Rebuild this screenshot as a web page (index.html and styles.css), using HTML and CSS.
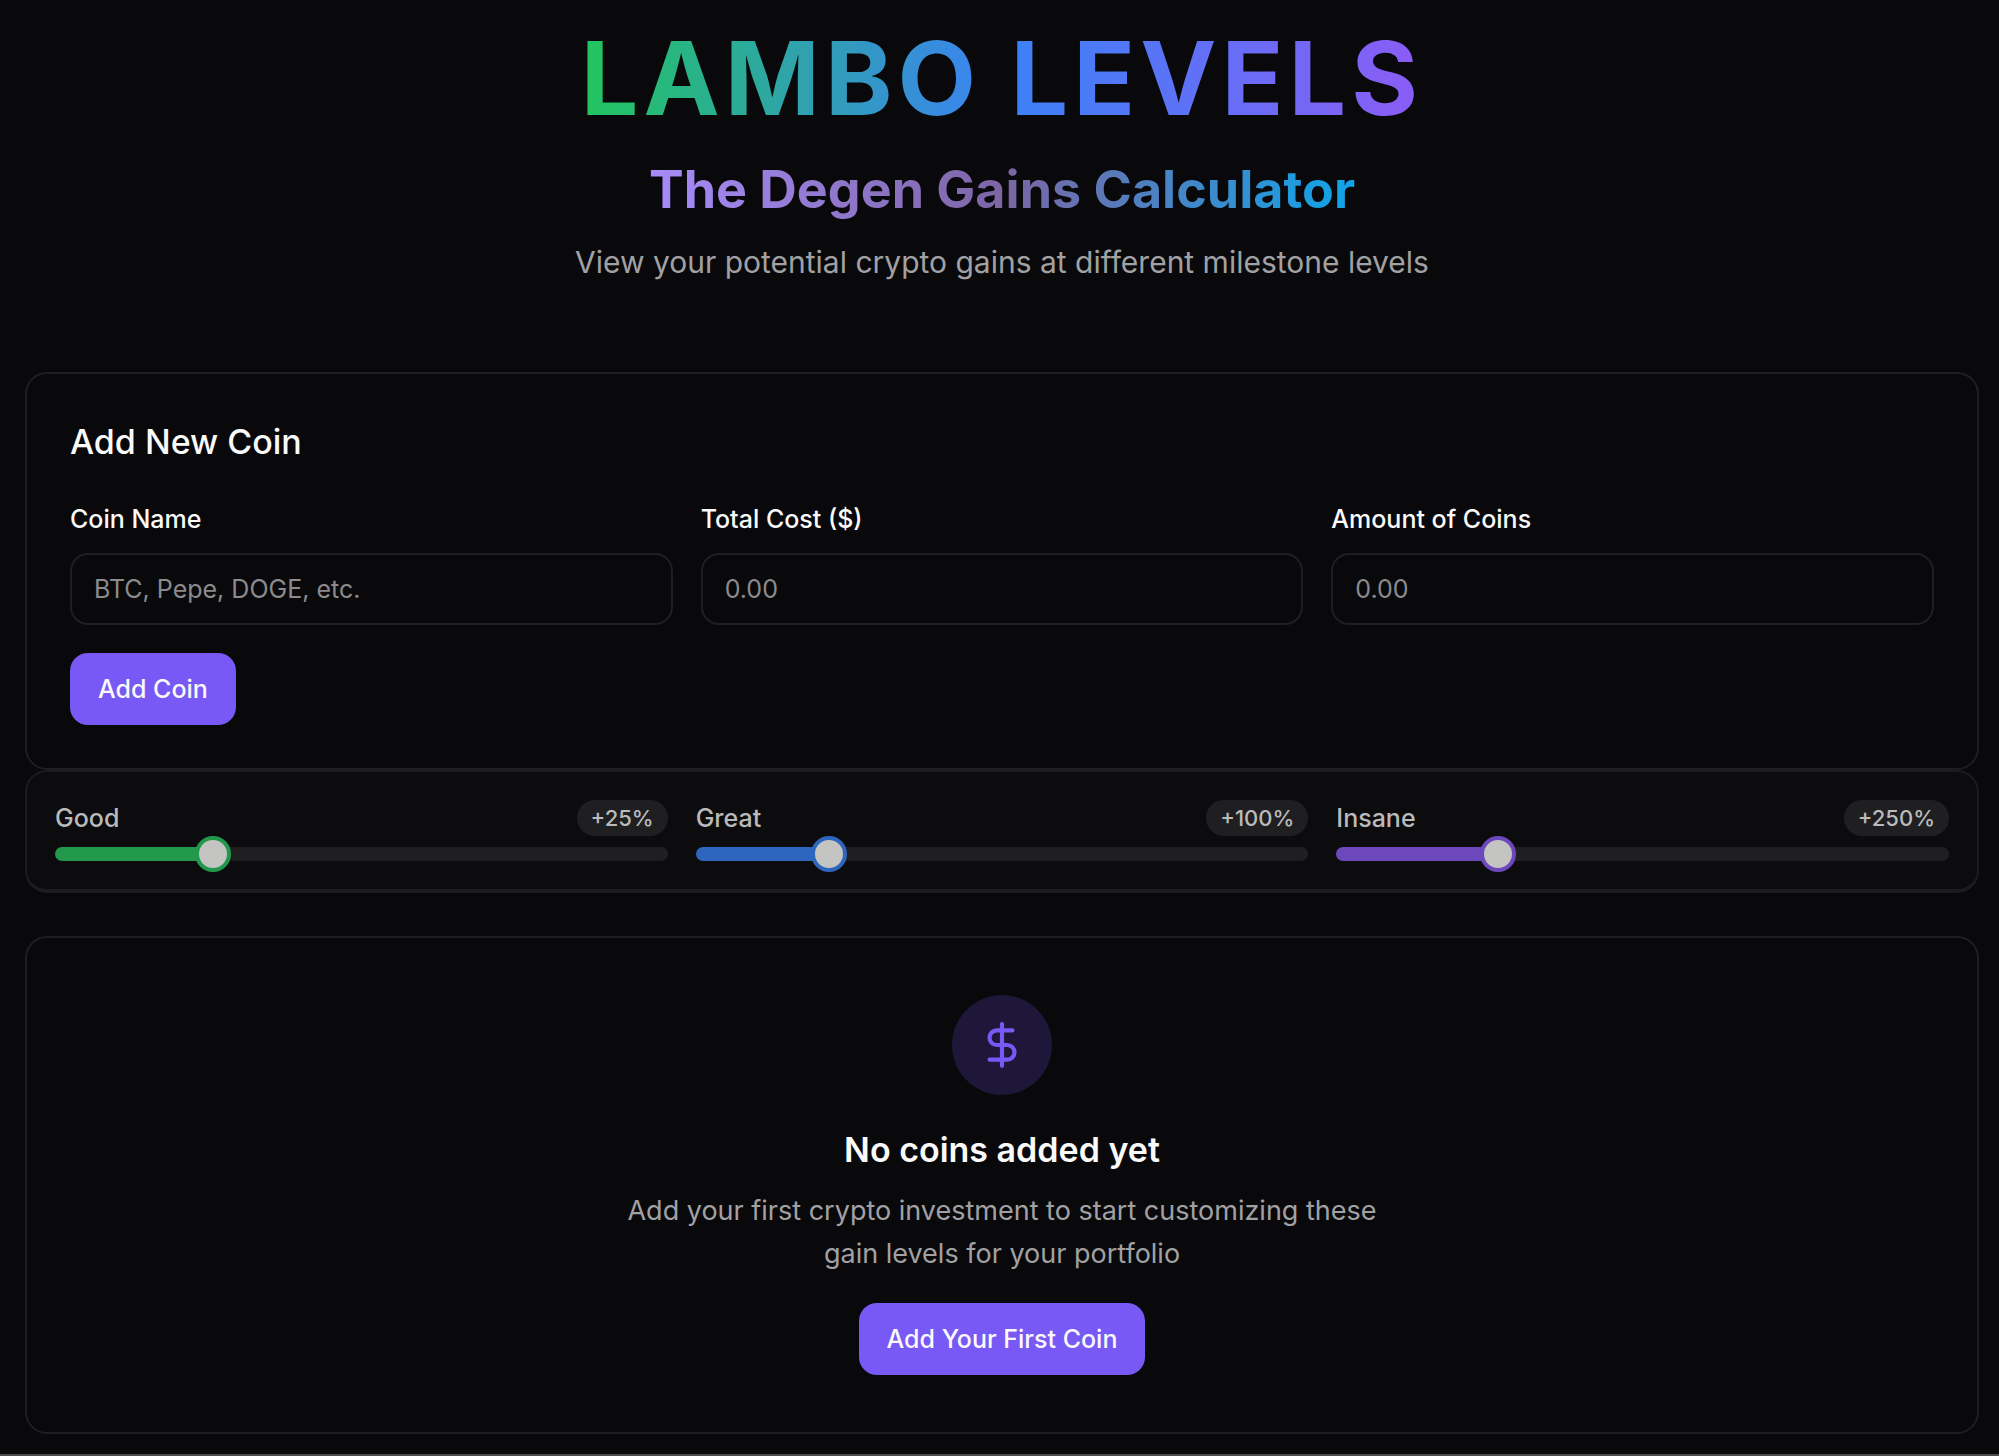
FILE: index.html
```html
<!DOCTYPE html>
<html lang="en">
<head>
  <meta charset="UTF-8">
  <title>Lambo Levels</title>
  <link rel="stylesheet" href="styles.css">
</head>
<body>
  <header class="header">
    <h1 class="title">LAMBO LEVELS</h1>
    <h2 class="subtitle">The Degen Gains Calculator</h2>
    <p class="tagline">View your potential crypto gains at different milestone levels</p>
  </header>

  <main class="content">
    <section class="card coin-card">
      <h3 class="card-title">Add New Coin</h3>
      <form class="coin-form">
        <div class="field">
          <label for="coin-name">Coin Name</label>
          <input class="text-input" id="coin-name" type="text" placeholder="BTC, Pepe, DOGE, etc.">
        </div>
        <div class="field">
          <label for="total-cost">Total Cost ($)</label>
          <input class="text-input" id="total-cost" type="text" inputmode="decimal" placeholder="0.00">
        </div>
        <div class="field">
          <label for="amount">Amount of Coins</label>
          <input class="text-input" id="amount" type="text" inputmode="decimal" placeholder="0.00">
        </div>
        <div class="form-actions">
          <button class="button" type="button">Add Coin</button>
        </div>
      </form>
    </section>

    <section class="card levels">
      <div class="level good">
        <div class="level-head">
          <label for="good">Good</label>
          <span class="badge">+25%</span>
        </div>
        <input class="slider" id="good" type="range" min="1" max="100" value="25" style="--fill: 0.24">
      </div>
      <div class="level great">
        <div class="level-head">
          <label for="great">Great</label>
          <span class="badge">+100%</span>
        </div>
        <input class="slider" id="great" type="range" min="0" max="500" value="100" style="--fill: 0.2">
      </div>
      <div class="level insane">
        <div class="level-head">
          <label for="insane">Insane</label>
          <span class="badge">+250%</span>
        </div>
        <input class="slider" id="insane" type="range" min="0" max="1000" value="250" style="--fill: 0.25">
      </div>
    </section>

    <section class="card empty">
      <div class="empty-icon">
        <svg viewBox="0 0 24 24" fill="none" stroke="currentColor" stroke-width="2" stroke-linecap="round" stroke-linejoin="round" aria-hidden="true">
          <line x1="12" y1="2" x2="12" y2="22"></line>
          <path d="M17 5H9.5a3.5 3.5 0 0 0 0 7h5a3.5 3.5 0 0 1 0 7H6"></path>
        </svg>
      </div>
      <h3 class="empty-title">No coins added yet</h3>
      <p class="empty-text">Add your first crypto investment to start customizing these gain levels for your portfolio</p>
      <button class="button" type="button">Add Your First Coin</button>
    </section>
  </main>
</body>
</html>
```

FILE: styles.css
```css
* {
  box-sizing: border-box;
}

body {
  margin: 0;
  min-height: 100vh;
  background-color: #09090b;
  border-bottom: 2px solid #4a4a4b;
  color: #fafafa;
  font-family: Inter, "Liberation Sans", sans-serif;
  font-size: 25px;
  line-height: 36px;
}

h1, h2, h3, p {
  margin: 0;
}

.header {
  padding: 22px 20px 86px 25px;
  text-align: center;
}

.title,
.subtitle {
  width: fit-content;
  margin: 0 auto;
  color: transparent;
  background-clip: text;
  -webkit-background-clip: text;
}

.title {
  font-size: 102px;
  font-weight: 700;
  line-height: 112px;
  letter-spacing: 0.05em;
  background-image: linear-gradient(to right, #22c55e, #3b82f6, #8b5cf6);
}

.subtitle {
  margin-top: 24px;
  font-size: 52px;
  font-weight: 700;
  line-height: 64px;
  background-image: linear-gradient(to right, #a78bfa, #7c66a4, #0ea5e9);
}

.tagline {
  margin-top: 16px;
  color: #a1a1a4;
  font-size: 30px;
  line-height: 48px;
}

.content {
  padding: 0 20px 20px 25px;
}

.card {
  border: 2px solid #1f1f22;
  border-radius: 22px;
}

.coin-card {
  padding: 43px;
}

.card-title {
  font-size: 34px;
  font-weight: 500;
  line-height: 50px;
}

.coin-form {
  display: grid;
  grid-template-columns: repeat(3, 1fr);
  gap: 28px;
  margin-top: 34px;
}

.field {
  display: flex;
  flex-direction: column;
  gap: 16px;
}

.field label {
  font-weight: 500;
}

.text-input {
  width: 100%;
  height: 72px;
  padding: 0 22px;
  border: 2px solid #1f1f22;
  border-radius: 18px;
  background-color: transparent;
  color: #fafafa;
  font: inherit;
}

.text-input::placeholder {
  color: #8b8b8e;
}

.form-actions {
  grid-column: 1 / -1;
}

.button {
  height: 72px;
  padding: 0 28px;
  border: none;
  border-radius: 18px;
  background-color: #7859f5;
  color: #fafafa;
  font: inherit;
  font-weight: 500;
  cursor: pointer;
}

.levels {
  display: grid;
  grid-template-columns: repeat(3, 1fr);
  gap: 28px;
  padding: 28px 28px 17px;
  background-color: #0c0c0e;
  border-color: #1c1c1e;
  border-bottom-width: 4px;
}

.level-head {
  display: flex;
  justify-content: space-between;
  align-items: center;
  color: #bababb;
  font-weight: 500;
}

.badge {
  padding: 0 14px;
  border-radius: 18px;
  background-color: #1f1f21;
  font-size: 22px;
}

.good {
  --level-color: #22994a;
}

.great {
  --level-color: #2f66bd;
}

.insane {
  --level-color: #6d48bd;
}

.slider {
  -webkit-appearance: none;
  appearance: none;
  display: block;
  width: 100%;
  height: 36px;
  margin: 0;
  background: transparent;
  cursor: pointer;
}

.slider::-webkit-slider-runnable-track {
  height: 14px;
  border-radius: 7px;
  background: linear-gradient(var(--level-color), var(--level-color)) no-repeat #1f1f21;
  background-size: calc(18px + (100% - 36px) * var(--fill)) 100%;
}

.slider::-webkit-slider-thumb {
  -webkit-appearance: none;
  appearance: none;
  width: 36px;
  height: 36px;
  margin-top: -11px;
  border: 4px solid var(--level-color);
  border-radius: 50%;
  background-color: #c4c4c3;
}

.empty {
  display: flex;
  flex-direction: column;
  align-items: center;
  margin-top: 43px;
  padding: 57px 43px;
  text-align: center;
}

.empty-icon {
  display: flex;
  justify-content: center;
  align-items: center;
  width: 100px;
  height: 100px;
  border-radius: 50%;
  background-color: #1e1739;
  color: #7859f5;
}

.empty-icon svg {
  width: 50px;
  height: 50px;
}

.empty-title {
  margin-top: 30px;
  font-size: 34px;
  font-weight: 600;
  line-height: 50px;
}

.empty-text {
  max-width: 800px;
  margin: 14px 0 28px;
  color: #a1a1a4;
  font-size: 27px;
  line-height: 43px;
}
```
